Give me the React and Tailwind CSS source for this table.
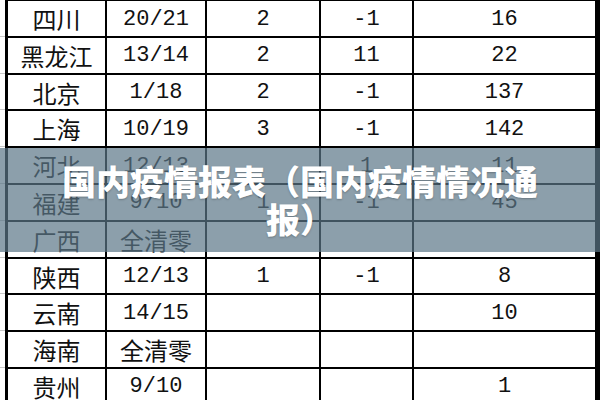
import React from 'react';

const rows = [
  ['四川', '20/21', '2', '-1', '16'],
  ['黑龙江', '13/14', '2', '11', '22'],
  ['北京', '1/18', '2', '-1', '137'],
  ['上海', '10/19', '3', '-1', '142'],
  ['河北', '12/13', '', '1', '11'],
  ['福建', '9/10', '1', '-1', '45'],
  ['广西', '全清零', '', '', ''],
  ['陕西', '12/13', '1', '-1', '8'],
  ['云南', '14/15', '', '', '10'],
  ['海南', '全清零', '', '', ''],
  ['贵州', '9/10', '', '', '1'],
];

const cjk = "font-['Noto_Sans_CJK_SC',sans-serif]";
const mono = "font-['Liberation_Mono','Noto_Sans_CJK_SC',monospace]";

const Cell = ({ children, className = '' }) => {
  const isCjk = /[\u4e00-\u9fff]/.test(children);
  return (
    <div
      className={`flex items-center justify-center text-[#111] ${
        isCjk ? `${cjk} text-[24px]` : `${mono} text-[22px]`
      } ${className}`}
    >
      {children}
    </div>
  );
};

export default function App() {
  return (
    <div className="relative w-[600px] h-[400px] overflow-hidden bg-white">
      <div className="flex -mt-[1px]">
        <div className="w-[5px] flex flex-col">
          {rows.map((_, i) => (
            <div key={i} className="h-[36.8px] border-t border-[#c8c8c8]" />
          ))}
        </div>
        <div className="flex-1 border-l-[3px] border-r-[5px] border-black">
          {rows.map((r, i) => (
            <div
              key={i}
              className="h-[36.8px] border-t-2 border-black grid grid-cols-[99px_100px_114px_93px_1fr]"
            >
              <Cell className="border-r-2 border-black">{r[0]}</Cell>
              <Cell className="border-r-2 border-black">{r[1]}</Cell>
              <Cell className="border-r-2 border-black">{r[2]}</Cell>
              <Cell className="border-r-2 border-black">{r[3]}</Cell>
              <Cell>{r[4]}</Cell>
            </div>
          ))}
        </div>
      </div>

      <div className="absolute left-0 right-0 top-[148px] h-[104px] bg-[#5b7687]/70 flex items-center justify-center">
        <div
          className={`w-[490px] text-center text-white font-black text-[34px] leading-[38px] ${cjk} [text-shadow:0_1px_2px_rgba(0,0,0,0.25)]`}
        >
          国内疫情报表（国内疫情情况通报）
        </div>
      </div>
    </div>
  );
}
